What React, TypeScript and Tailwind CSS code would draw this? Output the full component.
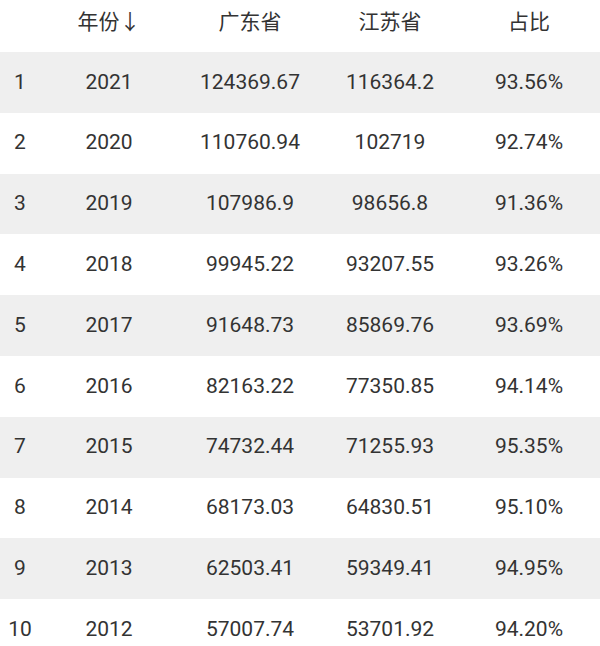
import React from 'react';

const rows: [number, string, string, string, string][] = [
  [1, '2021', '124369.67', '116364.2', '93.56%'],
  [2, '2020', '110760.94', '102719', '92.74%'],
  [3, '2019', '107986.9', '98656.8', '91.36%'],
  [4, '2018', '99945.22', '93207.55', '93.26%'],
  [5, '2017', '91648.73', '85869.76', '93.69%'],
  [6, '2016', '82163.22', '77350.85', '94.14%'],
  [7, '2015', '74732.44', '71255.93', '95.35%'],
  [8, '2014', '68173.03', '64830.51', '95.10%'],
  [9, '2013', '62503.41', '59349.41', '94.95%'],
  [10, '2012', '57007.74', '53701.92', '94.20%'],
];

const grid = 'grid grid-cols-[40px_138px_144px_136px_142px] items-center';

const App: React.FC = () => {
  return (
    <div
      className="w-[600px] h-[646px] overflow-hidden bg-white text-[#333333] text-[21px]"
      style={{ fontFamily: 'Roboto, "Noto Sans CJK SC", sans-serif' }}
    >
      {/* header */}
      <div className={`${grid} h-[52px] pb-[6px]`}>
        <div />
        <div className="text-center">年份↓</div>
        <div className="text-center">广东省</div>
        <div className="text-center">江苏省</div>
        <div className="text-center">占比</div>
      </div>

      {rows.map(([i, year, gd, js, pct]) => (
        <div
          key={i}
          className={`${grid} h-[60.8px] ${i % 2 === 1 ? 'bg-[#efefef]' : 'bg-white'}`}
        >
          <div className="text-center">{i}</div>
          <div className="text-center">{year}</div>
          <div className="text-center">{gd}</div>
          <div className="text-center">{js}</div>
          <div className="text-center">{pct}</div>
        </div>
      ))}
    </div>
  );
};

export default App;
